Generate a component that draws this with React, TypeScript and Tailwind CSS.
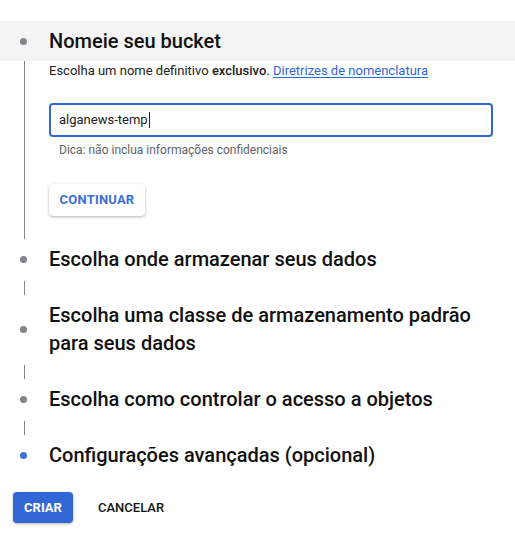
import React from 'react'

type StepProps = {
  title: React.ReactNode
  active?: boolean
}

function Dot({ active }: { active?: boolean }) {
  return (
    <div className='w-[49px] shrink-0 flex justify-start pl-[20px]'>
      <span className={'block w-[7px] h-[7px] rounded-full ' + (active ? 'bg-[#3b6fd8]' : 'bg-[#80868b]')}></span>
    </div>
  )
}

function Connector() {
  return (
    <div className='flex mt-[8px] mb-[6px]'>
      <div className='w-[49px] shrink-0 pl-[24px]'>
        <div className='w-px h-[14px] bg-[#80868b]'></div>
      </div>
    </div>
  )
}

function Step({ title, active }: StepProps) {
  return (
    <div className='flex items-center'>
      <Dot active={active} />
      <div className='text-[20px] leading-[28px] font-medium text-[#111] pr-4'>{title}</div>
    </div>
  )
}

export default function App() {
  return (
    <div className='w-[515px] h-[544px] bg-white pt-[21px]' style={{ fontFamily: 'Roboto, "Liberation Sans", sans-serif' }}>
      <div className='h-[40px] bg-[#f4f4f4] flex items-center'>
        <Dot />
        <div className='text-[20px] font-medium text-[#111]'>Nomeie seu bucket</div>
      </div>

      <div className='flex'>
        <div className='w-[49px] shrink-0 pl-[24px]'>
          <div className='w-px h-full bg-[#80868b]'></div>
        </div>
        <div className='flex-1 pr-[22px] pt-[2px] pb-[23px]'>
          <p className='text-[13px] leading-[16px] text-[#202124]'>
            Escolha um nome definitivo <span className='font-medium'>exclusivo</span>.{' '}
            <a href='#' className='text-[#3367d6] underline underline-offset-2 decoration-[#3367d6]'>Diretrizes de nomenclatura</a>
          </p>
          <div className='mt-[24px] h-[34px] border-2 border-[#3367d6] rounded-[4px] flex items-center px-[8px]'>
            <span className='text-[13px] text-[#202124]'>alganews-temp</span>
            <span className='w-px h-[16px] bg-[#202124] ml-px'></span>
          </div>
          <p className='mt-[5px] pl-[10px] text-[12px] leading-[16px] text-[#5f6368]'>Dica: não inclua informações confidenciais</p>
          <button className='mt-[26px] h-[32px] w-[96px] rounded-[4px] bg-white shadow-[0_1px_3px_rgba(0,0,0,0.3)] text-[13px] font-bold text-[#3b6fd8] tracking-[0.2px]'>CONTINUAR</button>
        </div>
      </div>

      <div className='mt-[6px]'>
        <Step title='Escolha onde armazenar seus dados' />
        <Connector />
        <Step title={<>Escolha uma classe de armazenamento padrão<br />para seus dados</>} />
        <Connector />
        <Step title='Escolha como controlar o acesso a objetos' />
        <Connector />
        <Step title='Configurações avançadas (opcional)' active />
      </div>

      <div className='mt-[23px] pl-[13px] flex items-center gap-[25px]'>
        <button className='h-[31px] w-[60px] rounded-[4px] bg-[#3367d6] text-white text-[13px] font-bold shadow-[0_1px_3px_rgba(0,0,0,0.3)]'>CRIAR</button>
        <button className='text-[13px] font-medium text-[#111]'>CANCELAR</button>
      </div>
    </div>
  )
}
